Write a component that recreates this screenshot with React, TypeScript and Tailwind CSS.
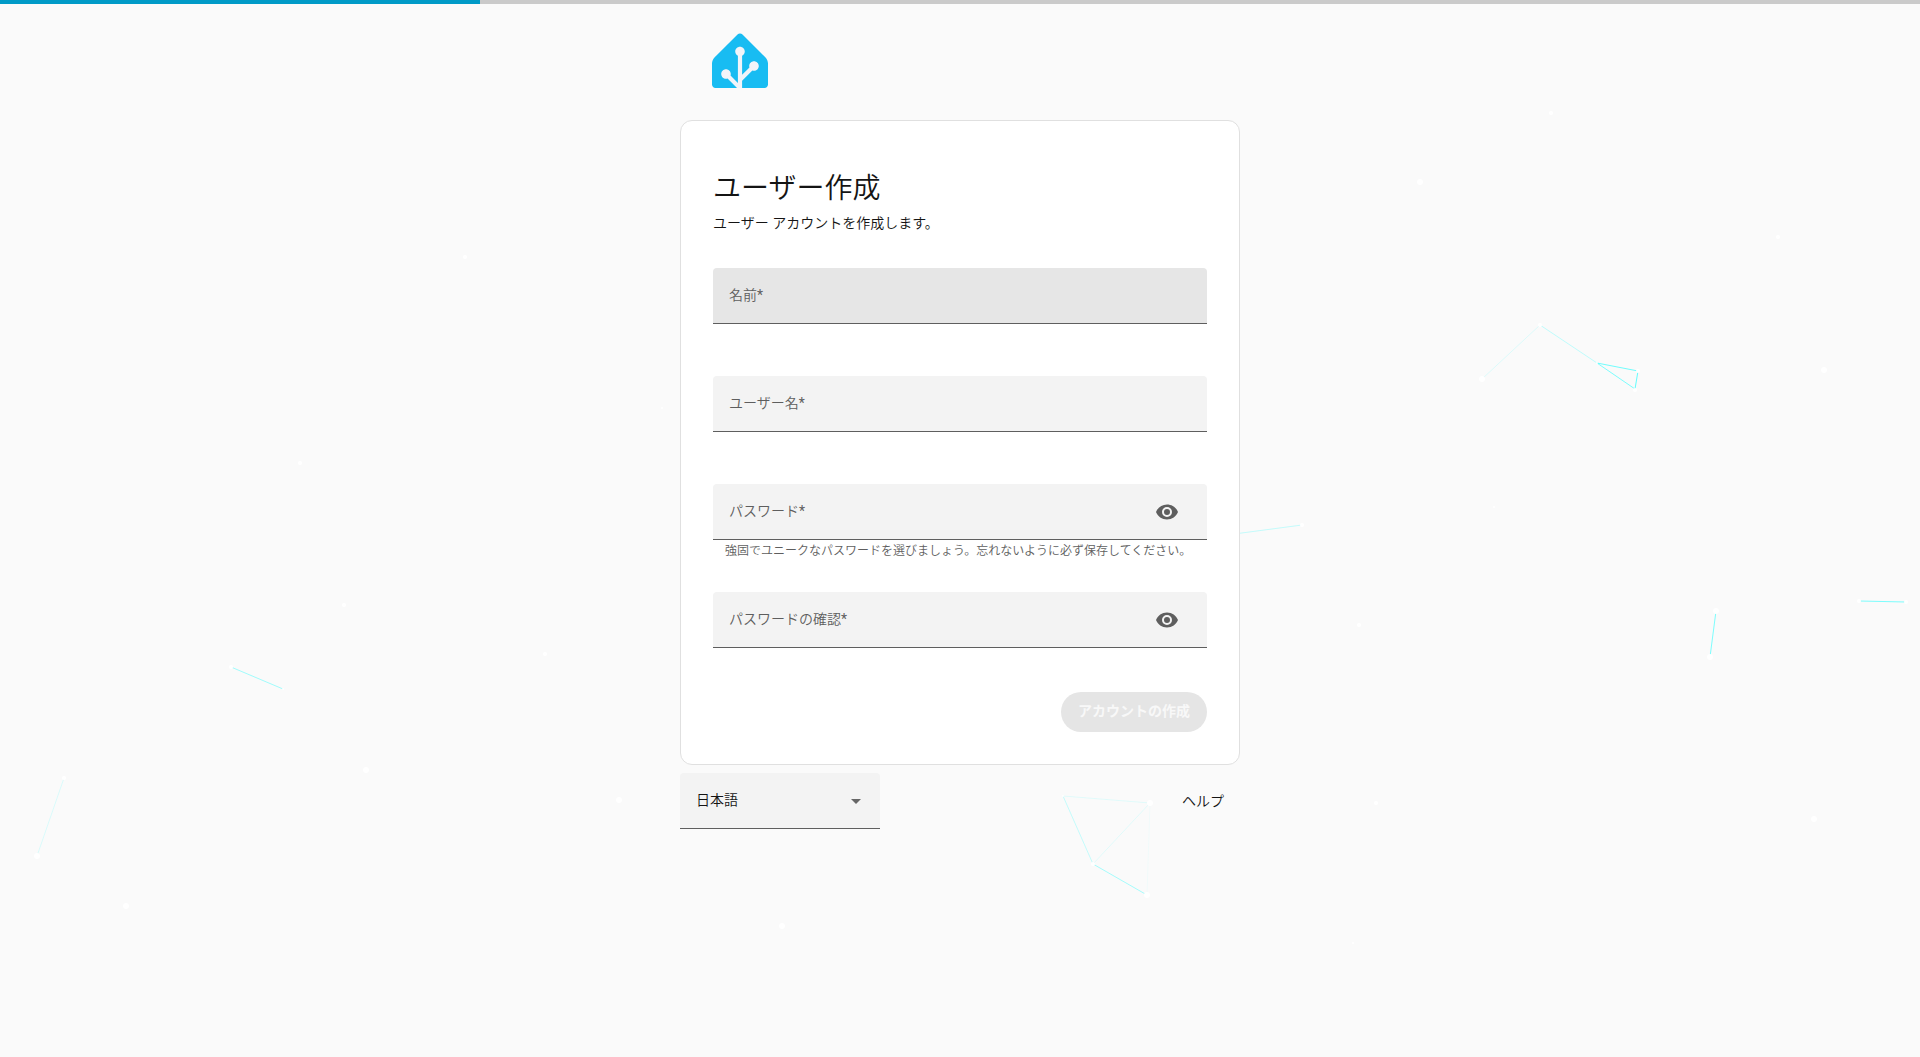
import { useState } from 'react';
import type { InputHTMLAttributes } from 'react';
import { clsx } from 'clsx';

const mdiEye =
  'M12,9A3,3 0 0,0 9,12A3,3 0 0,0 12,15A3,3 0 0,0 15,12A3,3 0 0,0 12,9M12,17A5,5 0 0,1 7,12A5,5 0 0,1 12,7A5,5 0 0,1 17,12A5,5 0 0,1 12,17M12,4.5C7,4.5 2.73,7.61 1,12C2.73,16.39 7,19.5 12,19.5C17,19.5 21.27,16.39 23,12C21.27,7.61 17,4.5 12,4.5Z';

// x, y, radius
const particles = [
  [1551, 113, 2], [1420, 182, 3], [1778, 237, 2], [465, 257, 2], [1482, 379, 3], [1540, 325, 2],
  [1597, 363, 1], [1638, 371, 2], [1635, 390, 2], [1824, 370, 3], [300, 463, 2], [662, 408, 1],
  [1494, 507, 1], [1302, 525, 2], [1359, 625, 2], [344, 605, 2], [545, 654, 2], [231, 667, 2],
  [283, 689, 1], [1716, 611, 3], [1710, 657, 3], [1859, 601, 2], [1906, 602, 2], [64, 778, 2],
  [37, 856, 3], [366, 770, 3], [126, 906, 3], [619, 800, 3], [782, 926, 3], [1063, 796, 1],
  [1150, 803, 3], [1093, 864, 2], [1147, 895, 3], [1376, 803, 2], [1814, 819, 3], [1353, 943, 1],
];

// x1, y1, x2, y2, opacity
const links = [
  [1482, 379, 1540, 325, 0.12], [1540, 325, 1597, 363, 0.24], [1597, 363, 1638, 371, 0.55],
  [1597, 363, 1635, 389, 0.5], [1638, 371, 1635, 389, 0.6], [1204, 538, 1302, 525, 0.22],
  [231, 667, 283, 689, 0.36], [64, 778, 37, 856, 0.13], [1716, 611, 1710, 657, 0.5],
  [1859, 601, 1906, 602, 0.5], [1063, 796, 1150, 803, 0.1], [1063, 796, 1093, 864, 0.22],
  [1150, 803, 1093, 864, 0.1], [1093, 864, 1147, 895, 0.34], [1150, 803, 1147, 895, 0.04],
];

const ParticleBackground = () => (
  <svg className="absolute inset-0 -z-10 h-full w-full" aria-hidden="true">
    {links.map(([x1, y1, x2, y2, opacity]) => (
      <line key={`${x1}-${y1}-${x2}-${y2}`} x1={x1} y1={y1} x2={x2} y2={y2} stroke="#00ffff" strokeOpacity={opacity} />
    ))}
    {particles.map(([x, y, r]) => (
      <circle key={`${x}-${y}`} cx={x} cy={y} r={r} fill="#fff" />
    ))}
  </svg>
);

const Logo = () => (
  <svg viewBox="0 0 240 240" className="h-14 w-14" role="img" aria-label="Home Assistant">
    <path
      fill="#F2F4F9"
      d="M240 224.762C240 233.012 233.25 239.762 225 239.762H15C6.75 239.762 0 233.012 0 224.762V134.762C0 126.512 4.77 114.993 10.61 109.153L109.39 10.3725C115.22 4.5425 124.77 4.5425 130.6 10.3725L229.39 109.162C235.22 114.992 240 126.522 240 134.772V224.772V224.762Z"
    />
    <path
      fill="#18BCF2"
      d="M229.39 109.153L130.61 10.3725C124.78 4.5425 115.23 4.5425 109.4 10.3725L10.61 109.153C4.78 114.983 0 126.512 0 134.762V224.762C0 233.012 6.75 239.762 15 239.762H107.27L66.64 199.132C64.55 199.852 62.32 200.262 60 200.262C48.7 200.262 39.5 191.062 39.5 179.762C39.5 168.462 48.7 159.262 60 159.262C71.3 159.262 80.5 168.462 80.5 179.762C80.5 182.092 80.09 184.322 79.37 186.412L111 218.042V102.162C104.2 98.8225 99.5 91.8425 99.5 83.7725C99.5 72.4725 108.7 63.2725 120 63.2725C131.3 63.2725 140.5 72.4725 140.5 83.7725C140.5 91.8425 135.8 98.8225 129 102.162V183.432L160.46 151.972C159.84 150.012 159.5 147.932 159.5 145.772C159.5 134.472 168.7 125.272 180 125.272C191.3 125.272 200.5 134.472 200.5 145.772C200.5 157.072 191.3 166.272 180 166.272C177.5 166.272 175.12 165.802 172.91 164.982L129 208.892V239.772H225C233.25 239.772 240 233.022 240 224.772V134.772C240 126.522 235.23 115.002 229.39 109.162Z"
    />
  </svg>
);

interface TextFieldProps extends InputHTMLAttributes<HTMLInputElement> {
  id: string;
  label: string;
  helper?: string;
  active?: boolean;
}

const TextField = ({ id, label, helper, active, type = 'text', ...rest }: TextFieldProps) => {
  const [visible, setVisible] = useState(false);
  const isPassword = type === 'password';

  return (
    <div className="h-[84px]">
      <div
        className={clsx(
          'relative flex h-14 items-center rounded-t border-b border-[#5e5e5e] pl-4',
          isPassword ? 'pr-7' : 'pr-4',
          active ? 'bg-[#e6e6e6]' : 'bg-[#f3f3f3]'
        )}
      >
        <input
          id={id}
          type={isPassword && visible ? 'text' : type}
          placeholder=" "
          required
          className="peer h-full min-w-0 flex-1 bg-transparent pt-4 outline-none"
          {...rest}
        />
        {/* floats to the top once the field is focused or filled */}
        <label
          htmlFor={id}
          className="pointer-events-none absolute top-1 left-4 text-xs leading-6 text-[#5e5e5e] peer-placeholder-shown:top-[15px] peer-placeholder-shown:text-sm peer-placeholder-shown:leading-6 peer-focus:top-1 peer-focus:text-xs"
        >
          {label}
          <span className="font-normal">*</span>
        </label>
        {isPassword && (
          <button
            type="button"
            onClick={() => setVisible(!visible)}
            aria-label={visible ? 'パスワードを隠す' : 'パスワードを表示'}
            className="text-[#5e5e5e]"
          >
            <svg viewBox="0 0 24 24" className="h-6 w-6 fill-current" aria-hidden="true">
              <path d={mdiEye} />
            </svg>
          </button>
        )}
      </div>
      {helper && <p className="px-3 pt-px text-xs leading-5 text-[#5e5e5e]">{helper}</p>}
    </div>
  );
};

export default function App() {
  return (
    <div className="relative isolate min-h-screen overflow-hidden bg-[#fafafa] font-[Roboto,'Noto_Sans_CJK_JP',sans-serif] text-sm font-[350] text-[#141414]">
      <ParticleBackground />
      <div className="h-1 bg-[#cacaca]" role="progressbar" aria-valuenow={25} aria-valuemin={0} aria-valuemax={100}>
        <div className="h-full w-1/4 bg-[#009ac7]" />
      </div>

      <main className="mx-auto max-w-[560px] pt-7">
        <div className="px-8">
          <Logo />
        </div>

        <form className="mt-8 rounded-xl border border-[#e0e0e0] bg-white px-8 pt-12 pb-8">
          <h1 className="text-[28px] leading-10">ユーザー作成</h1>
          <p className="mt-1 leading-5">ユーザー アカウントを作成します。</p>

          <div className="mt-[35px] flex flex-col gap-6">
            <TextField id="name" label="名前" active />
            <TextField id="username" label="ユーザー名" />
            <TextField
              id="password"
              label="パスワード"
              type="password"
              helper="強固でユニークなパスワードを選びましょう。忘れないように必ず保存してください。"
            />
            <TextField id="password_confirm" label="パスワードの確認" type="password" />
          </div>

          <div className="mt-4 flex justify-end">
            <button
              type="submit"
              disabled
              className="h-10 rounded-full bg-[#e5e5e5] px-[17px] pb-0.5 font-bold text-[#f8f8f8]"
            >
              アカウントの作成
            </button>
          </div>
        </form>

        <footer className="mt-2 flex items-center justify-between">
          <div className="relative w-[200px]">
            <select
              aria-label="言語"
              className="block h-14 w-full appearance-none rounded-t border-b border-[#5e5e5e] bg-[#f3f3f3] px-4 pb-0.5 outline-none"
            >
              <option>日本語</option>
            </select>
            <svg viewBox="0 0 24 24" className="pointer-events-none absolute top-4 right-3 h-6 w-6" aria-hidden="true">
              <path fill="#666" d="M7 10l5 5 5-5z" />
            </svg>
          </div>
          <a href="#help" className="px-4">
            ヘルプ
          </a>
        </footer>
      </main>
    </div>
  );
}
